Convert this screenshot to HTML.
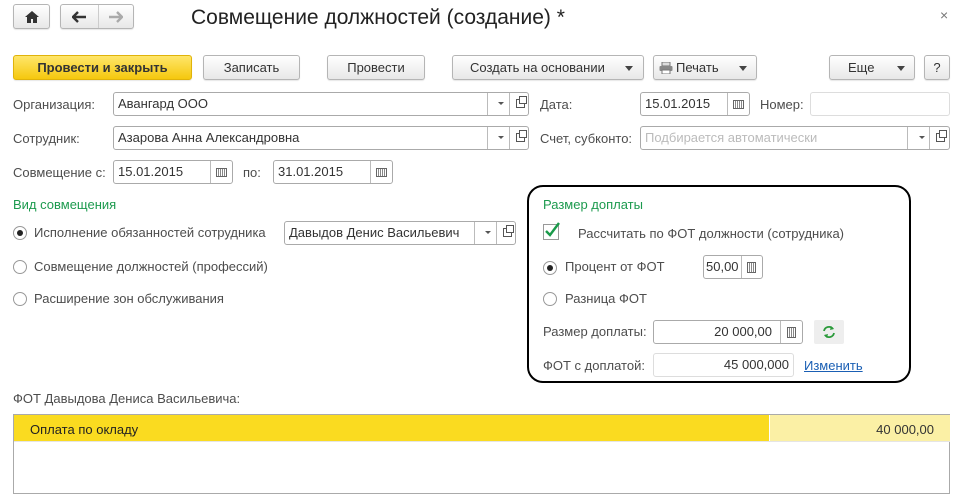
<!DOCTYPE html>
<html><head><meta charset="utf-8"><style>
*{box-sizing:border-box;margin:0;padding:0}
body{width:976px;height:468px;background:#fff;font-family:"Liberation Sans",Arial,sans-serif;font-size:13px;color:#4d4d4d;position:relative;overflow:hidden}
.a{position:absolute}
.btn{position:absolute;border:1px solid #b5b5b5;border-radius:3px;background:linear-gradient(#fff,#e8e8e8);color:#333;text-align:center;font-size:13px;line-height:24px;height:25px;box-shadow:0 1px 1px rgba(0,0,0,.1)}
.fld{position:absolute;border:1px solid #aaa;border-radius:3px;background:#fff;height:24px;color:#333;line-height:22px;padding-left:4px;font-size:13px}
.lbl{position:absolute;font-size:13px;color:#4d4d4d;line-height:16px}
.sep{position:absolute;top:0;bottom:0;border-left:1px solid #bbb}
.dd{position:absolute;top:9px;width:0;height:0;border-left:3px solid transparent;border-right:3px solid transparent;border-top:3px solid #555}
.cal{position:absolute;top:7px;width:11px;height:9px;border:1px solid #666;background:repeating-linear-gradient(90deg,#fff 0 1px,#888 1px 2px)}
.op{position:absolute;top:6px;width:9px;height:9px;border:1px solid #555}
.op:before{content:"";position:absolute;left:2px;top:-4px;width:6px;height:6px;border:1px solid #555;background:#fff}
.rad{position:absolute;width:14px;height:14px;border:1px solid #999;border-radius:50%;background:#fff}
.rad.on:after{content:"";position:absolute;left:3px;top:3px;width:6px;height:6px;border-radius:50%;background:#222}
.green{color:#1c9a4e}
</style></head><body>
<div class="btn" style="left:13px;top:4px;width:37px;height:25px"><svg width="14" height="12" viewBox="0 0 14 12" style="margin-top:6px"><path d="M7 0L0 6h2v6h4V8h2v4h4V6h2z" fill="#333"/></svg></div>
<div class="btn" style="left:60px;top:4px;width:74px;height:25px"><div class="sep" style="left:37px;border-color:#ccc"></div>
<svg class="a" style="left:11px;top:6px" width="14" height="12" viewBox="0 0 14 12"><path d="M6 1L1 6l5 5M1 6h13" stroke="#333" stroke-width="2.4" fill="none"/></svg>
<svg class="a" style="left:48px;top:6px" width="14" height="12" viewBox="0 0 14 12"><path d="M8 1l5 5-5 5M13 6H0" stroke="#aaa" stroke-width="2.4" fill="none"/></svg></div>
<div class="a" style="left:191px;top:6px;font-size:21px;color:#222">Совмещение должностей (создание) *</div>
<div class="a" style="left:940px;top:7px;font-size:14px;color:#777">×</div>

<div class="btn" style="left:13px;top:55px;width:179px;background:linear-gradient(#ffe66a,#f5c80e);border-color:#e0b30a;font-weight:bold;color:#333">Провести и закрыть</div>
<div class="btn" style="left:203px;top:55px;width:97px">Записать</div>
<div class="btn" style="left:327px;top:55px;width:98px">Провести</div>
<div class="btn" style="left:452px;top:55px;width:192px;text-align:left;padding-left:17px">Создать на основании<div class="dd" style="left:172px;top:10px;border-left:4px solid transparent;border-right:4px solid transparent;border-top:5px solid #444"></div></div>
<div class="btn" style="left:653px;top:55px;width:104px;text-align:left;padding-left:22px"><svg class="a" style="left:5px;top:6px" width="14" height="12" viewBox="0 0 14 12"><rect x="3" y="0" width="8" height="4" fill="#ddd" stroke="#777"/><rect x="0.5" y="4" width="13" height="5" rx="1" fill="#888"/><rect x="3" y="8" width="8" height="4" fill="#fff" stroke="#777"/></svg>Печать<div class="dd" style="left:85px;top:10px;border-left:4px solid transparent;border-right:4px solid transparent;border-top:5px solid #444"></div></div>
<div class="btn" style="left:829px;top:55px;width:86px;text-align:left;padding-left:18px">Еще<div class="dd" style="left:67px;top:10px;border-left:4px solid transparent;border-right:4px solid transparent;border-top:5px solid #444"></div></div>
<div class="btn" style="left:924px;top:55px;width:26px">?</div>

<div class="lbl" style="left:13px;top:97px">Организация:</div>
<div class="fld" style="left:113px;top:92px;width:416px">Авангард ООО<div class="sep" style="left:373px"></div><div class="dd" style="left:384px"></div><div class="sep" style="left:395px"></div><div class="op" style="left:402px"></div></div>
<div class="lbl" style="left:540px;top:97px">Дата:</div>
<div class="fld" style="left:640px;top:92px;width:110px">15.01.2015<div class="sep" style="left:86px"></div><div class="cal" style="left:92px"></div></div>
<div class="lbl" style="left:760px;top:97px">Номер:</div>
<div class="fld" style="left:810px;top:92px;width:140px;border-color:#ddd"></div>

<div class="lbl" style="left:13px;top:131px">Сотрудник:</div>
<div class="fld" style="left:113px;top:126px;width:416px">Азарова Анна Александровна<div class="sep" style="left:373px"></div><div class="dd" style="left:384px"></div><div class="sep" style="left:395px"></div><div class="op" style="left:402px"></div></div>
<div class="lbl" style="left:540px;top:131px">Счет, субконто:</div>
<div class="fld" style="left:640px;top:126px;width:310px;color:#bbb">Подбирается автоматически<div class="sep" style="left:266px"></div><div class="dd" style="left:278px"></div><div class="sep" style="left:288px"></div><div class="op" style="left:295px"></div></div>

<div class="lbl" style="left:13px;top:165px">Совмещение с:</div>
<div class="fld" style="left:113px;top:160px;width:120px">15.01.2015<div class="sep" style="left:96px"></div><div class="cal" style="left:102px"></div></div>
<div class="lbl" style="left:243px;top:165px">по:</div>
<div class="fld" style="left:273px;top:160px;width:120px">31.01.2015<div class="sep" style="left:96px"></div><div class="cal" style="left:102px"></div></div>

<div class="lbl green" style="left:13px;top:197px">Вид совмещения</div>
<div class="rad on" style="left:13px;top:226px"></div><div class="lbl" style="left:34px;top:225px">Исполнение обязанностей сотрудника</div>
<div class="fld" style="left:284px;top:221px;width:232px">Давыдов Денис Васильевич<div class="sep" style="left:189px"></div><div class="dd" style="left:200px"></div><div class="sep" style="left:211px"></div><div class="op" style="left:218px"></div></div>
<div class="rad" style="left:13px;top:260px"></div><div class="lbl" style="left:34px;top:259px">Совмещение должностей (профессий)</div>
<div class="rad" style="left:13px;top:292px"></div><div class="lbl" style="left:34px;top:291px">Расширение зон обслуживания</div>

<div class="a" style="left:527px;top:185px;width:384px;height:198px;border:2.5px solid #000;border-radius:16px"></div>
<div class="lbl green" style="left:543px;top:197px">Размер доплаты</div>
<div class="a" style="left:543px;top:224px;width:16px;height:16px;border:1px solid #999;background:#fff"><svg width="16" height="16" viewBox="0 0 16 16" style="position:absolute;left:0;top:-3px"><path d="M2 9l4 4 9-12" stroke="#1a9a4a" stroke-width="2.4" fill="none"/></svg></div>
<div class="lbl" style="left:578px;top:226px">Рассчитать по ФОТ должности (сотрудника)</div>
<div class="rad on" style="left:543px;top:261px"></div><div class="lbl" style="left:565px;top:259px">Процент от ФОТ</div>
<div class="fld" style="left:703px;top:255px;width:60px;padding-left:2px">50,00<div class="sep" style="left:37px"></div><div class="cal" style="left:43px;width:9px;height:11px;top:6px"></div></div>
<div class="rad" style="left:543px;top:292px"></div><div class="lbl" style="left:565px;top:291px">Разница ФОТ</div>
<div class="lbl" style="left:543px;top:324px">Размер доплаты:</div>
<div class="fld" style="left:653px;top:320px;width:150px;text-align:right;padding-right:30px">20 000,00<div class="sep" style="left:126px"></div><div class="cal" style="left:133px;width:9px;height:11px;top:6px"></div></div>
<div class="a" style="left:814px;top:320px;width:30px;height:24px;background:#eee;border-radius:2px"><svg width="14" height="14" viewBox="0 0 14 14" style="position:absolute;left:8px;top:5px"><path d="M2 6a5 5 0 0 1 9-2M12 8a5 5 0 0 1-9 2" stroke="#2a9a3a" stroke-width="1.8" fill="none"/><path d="M9 1l3 3-4 1zM5 13l-3-3 4-1z" fill="#2a9a3a"/></svg></div>
<div class="lbl" style="left:543px;top:358px">ФОТ с доплатой:</div>
<div class="fld" style="left:653px;top:353px;width:141px;text-align:right;padding-right:4px;border-color:#ddd">45 000,000</div>
<div class="lbl" style="left:804px;top:358px;color:#1a5fb4;text-decoration:underline">Изменить</div>

<div class="lbl" style="left:13px;top:391px">ФОТ Давыдова Дениса Васильевича:</div>
<div class="a" style="left:13px;top:414px;width:937px;height:80px;border:1px solid #aaa">
<div class="a" style="left:0;top:0;width:755px;height:26px;background:#fadb20;color:#222;padding:7px 0 0 16px">Оплата по окладу</div>
<div class="a" style="left:756px;top:0;width:180px;height:26px;background:#fbf0a5;color:#333;text-align:right;padding:7px 16px 0 0">40 000,00</div>
<div class="a" style="left:0;top:26px;width:936px;border-top:1px solid #e5e5e5"></div>
</div>
</body></html>
